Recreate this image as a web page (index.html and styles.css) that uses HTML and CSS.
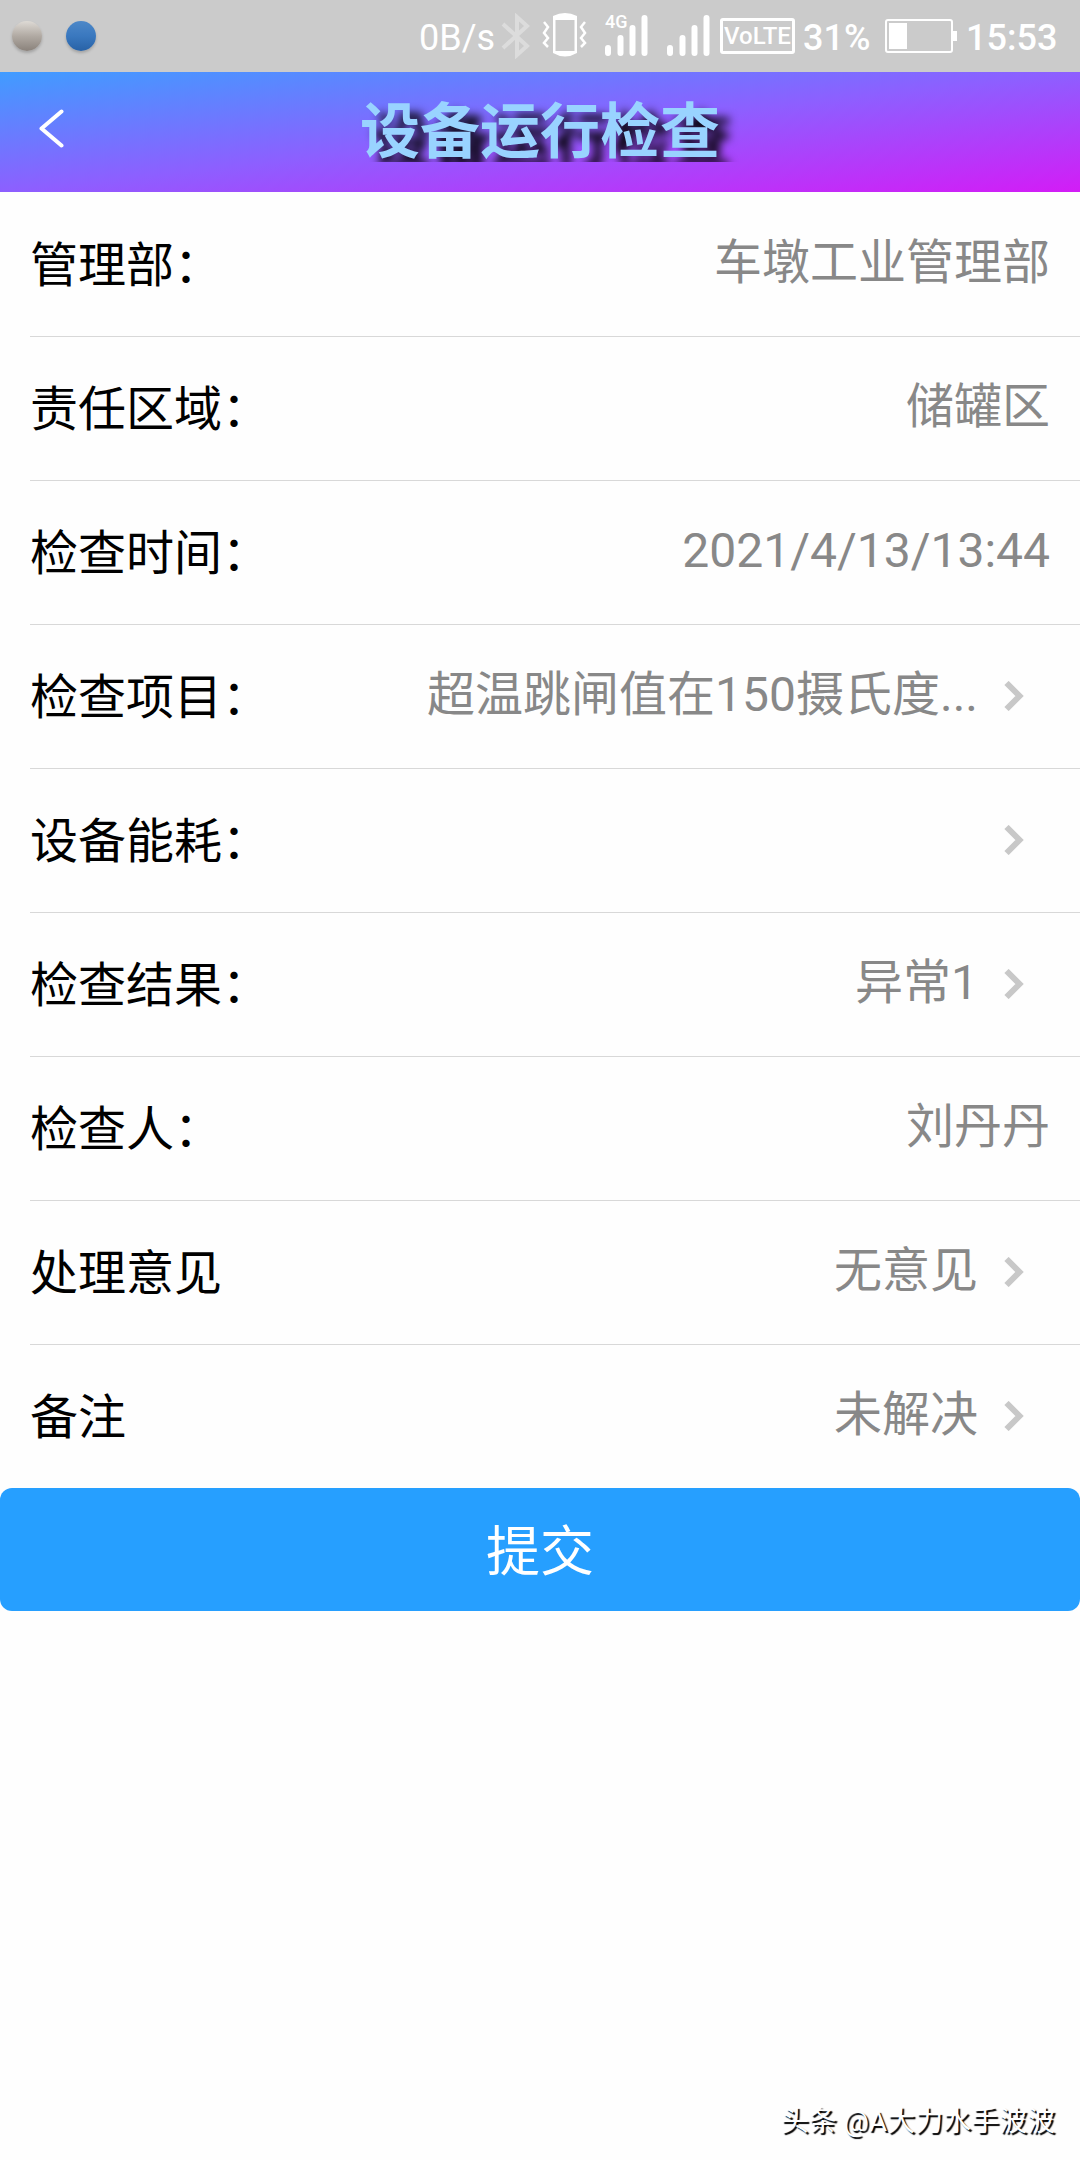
FILE: index.html
```
<!DOCTYPE html>
<html lang="zh-CN">
<head>
    <meta charset="UTF-8">
    <meta name="viewport" content="width=device-width, initial-scale=1.0">
    <title>设备运行检查</title>
    <link rel="stylesheet" href="styles.css">
</head>
<body>
    <div class="status_bar">
        <div class="notices">
            <span class="dot dot_grey"></span>
            <span class="dot dot_blue"></span>
        </div>
        <span class="speed">0B/s</span>
        <svg class="bluetooth" width="30" height="46" viewBox="0 0 30 46">
            <path d="M2 11 L26 33 L16 42 V4 L26 13 L2 35" />
        </svg>
        <svg class="vibrate" width="46" height="46" viewBox="0 0 46 46">
            <path class="wave" d="M2 9 L6 14 L2 20 L6 25 L2 30 L6 34 M43 9 L39 14 L43 20 L39 25 L43 30 L39 34" />
            <path class="phone" fill-rule="evenodd" d="M11 3 Q23 -3 35 3 V40 Q23 47 11 40 Z M13.500 7 V38 H32.500 V7 Z" />
        </svg>
        <div class="signal">
            <span class="net">4G</span>
            <svg width="44" height="42" viewBox="0 0 44 42">
                <path d="M3 33 V38 M15.500 23 V38 M27.500 13 V38 M39.500 3 V38" />
            </svg>
        </div>
        <div class="signal signal_two">
            <svg width="44" height="42" viewBox="0 0 44 42">
                <path d="M3 33 V38 M15.500 23 V38 M27.500 13 V38 M39.500 3 V38" />
            </svg>
        </div>
        <span class="volte">VoLTE</span>
        <span class="percent">31%</span>
        <span class="battery"><span class="level"></span></span>
        <span class="clock">15:53</span>
    </div>

    <div class="header">
        <svg class="back" width="26" height="40" viewBox="0 0 26 40">
            <path d="M23.500 2.500 L3.500 19.500 L23.500 36.500" />
        </svg>
        <h1>设备运行检查</h1>
    </div>

    <div class="form">
        <div class="row">
            <label>管理部：</label>
            <span class="value">车墩工业管理部</span>
        </div>
        <div class="row">
            <label>责任区域：</label>
            <span class="value">储罐区</span>
        </div>
        <div class="row">
            <label>检查时间：</label>
            <span class="value">2021/4/13/13:44</span>
        </div>
        <div class="row link">
            <label>检查项目：</label>
            <span class="value">超温跳闸值在150摄氏度...</span>
            <svg class="arrow" width="20" height="30" viewBox="0 0 20 30"><path d="M2.500 2 L15.500 15 L2.500 28" /></svg>
        </div>
        <div class="row link">
            <label>设备能耗：</label>
            <span class="value"></span>
            <svg class="arrow" width="20" height="30" viewBox="0 0 20 30"><path d="M2.500 2 L15.500 15 L2.500 28" /></svg>
        </div>
        <div class="row link">
            <label>检查结果：</label>
            <span class="value">异常1</span>
            <svg class="arrow" width="20" height="30" viewBox="0 0 20 30"><path d="M2.500 2 L15.500 15 L2.500 28" /></svg>
        </div>
        <div class="row">
            <label>检查人：</label>
            <span class="value">刘丹丹</span>
        </div>
        <div class="row link">
            <label>处理意见</label>
            <span class="value">无意见</span>
            <svg class="arrow" width="20" height="30" viewBox="0 0 20 30"><path d="M2.500 2 L15.500 15 L2.500 28" /></svg>
        </div>
        <div class="row link">
            <label>备注</label>
            <span class="value">未解决</span>
            <svg class="arrow" width="20" height="30" viewBox="0 0 20 30"><path d="M2.500 2 L15.500 15 L2.500 28" /></svg>
        </div>
    </div>

    <button class="submit">提交</button>

    <div class="credit">头条 @A大力水手波波</div>
</body>
</html>
```
FILE: styles.css
```
* {
    box-sizing: border-box;
}

body {
    margin: 0;
    height: 2160px;
    display: flex;
    flex-direction: column;
    background-color: #fefefe;
    font-family: Roboto, "Noto Sans CJK SC", sans-serif;
}

/* status bar */
.status_bar {
    display: flex;
    align-items: center;
    height: 72px;
    padding: 0 24px 0 12px;
    background-color: #cbcbcb;
    color: white;
    font-size: 36px;
    line-height: 72px;
    white-space: nowrap;
}

.notices {
    display: flex;
    gap: 24px;
    margin-right: auto;
}

.dot {
    width: 30px;
    height: 30px;
    border-radius: 50%;
    box-shadow: 0 2px 3px rgba(0, 0, 0, 0.2);
}

.dot_grey {
    background: linear-gradient(#dedad5, #b1aaa3 50%, #8a827b);
}

.dot_blue {
    background: linear-gradient(#4d88c8, #3a78bf 50%, #2862a6);
}

.status_bar svg {
    fill: none;
    stroke: white;
    flex: none;
}

.speed {
    width: 82px;
    padding-top: 4px;
}

.status_bar .bluetooth {
    stroke: #dcdcdc;
    stroke-width: 4;
}

.vibrate {
    margin-left: 11px;
}

.vibrate .wave {
    stroke-width: 2.5;
}

.status_bar .phone {
    fill: white;
    stroke: none;
}

.signal {
    position: relative;
    display: flex;
    margin-left: 17px;
}

.signal_two {
    margin-left: 18px;
}

.signal path {
    stroke-width: 6;
    stroke-linecap: round;
}

.net {
    position: absolute;
    left: 0;
    top: 0;
    font-size: 18px;
    font-weight: 500;
    line-height: 14px;
}

.volte {
    width: 75px;
    height: 36px;
    margin-left: 9px;
    border: 3px solid white;
    border-radius: 3px;
    font-size: 24px;
    font-weight: 500;
    line-height: 31px;
    text-align: center;
}

.percent {
    width: 67px;
    margin-left: 8px;
    padding-top: 4px;
    font-weight: 500;
}

.battery {
    position: relative;
    width: 68px;
    height: 34px;
    margin-left: 15px;
    padding: 2px;
    border: 2px solid white;
    border-radius: 3px;
}

.battery::after {
    content: "";
    position: absolute;
    right: -6px;
    top: 10px;
    width: 4px;
    height: 10px;
    background-color: white;
}

.level {
    display: block;
    width: 18px;
    height: 26px;
    background-color: white;
}

.clock {
    width: 90px;
    margin-left: 13px;
    padding-top: 4px;
    font-weight: 500;
}

/* title bar */
.header {
    display: flex;
    align-items: center;
    height: 120px;
    padding: 0 38px;
    background: linear-gradient(to bottom right, #409cff, #8d5fff 50%, #d31cf6);
}

.back {
    width: 26px;
    margin-top: -6px;
    fill: none;
    stroke: white;
    stroke-width: 4;
    stroke-linecap: round;
    stroke-linejoin: round;
}

.header h1 {
    flex: 1;
    margin: 2px 26px 0 0;
    color: #99d3ff;
    font-size: 60px;
    font-weight: bold;
    line-height: 88px;
    text-align: center;
    text-shadow: 12px 10px 10px #000;
    clip-path: inset(0 0 15px 0);
}

/* form rows */
.form {
    padding-left: 30px;
}

.row {
    display: flex;
    align-items: center;
    height: 144px;
    padding-right: 30px;
    border-top: 1px solid #d8d8d8;
    font-size: 48px;
    line-height: 72px;
}

.row:first-child {
    border-top-color: transparent;
}

.row label {
    margin-top: 2px;
    color: black;
}

.value {
    margin: -4px 0 0 auto;
    color: #888;
}

.link {
    padding-right: 55px;
}

.arrow {
    margin: -2px 1px 0 26px;
    fill: none;
    stroke: #c8c8c8;
    stroke-width: 6;
}

.submit {
    height: 123px;
    flex: none;
    padding: 6px 0 0;
    border: none;
    border-radius: 12px;
    background-color: #269fff;
    color: white;
    font-family: inherit;
    font-size: 54px;
    line-height: 117px;
}

.credit {
    margin: auto 25px 20px auto;
    color: white;
    font-size: 28px;
    line-height: 36px;
    text-shadow: 2px 2px 1px #000;
}
```
